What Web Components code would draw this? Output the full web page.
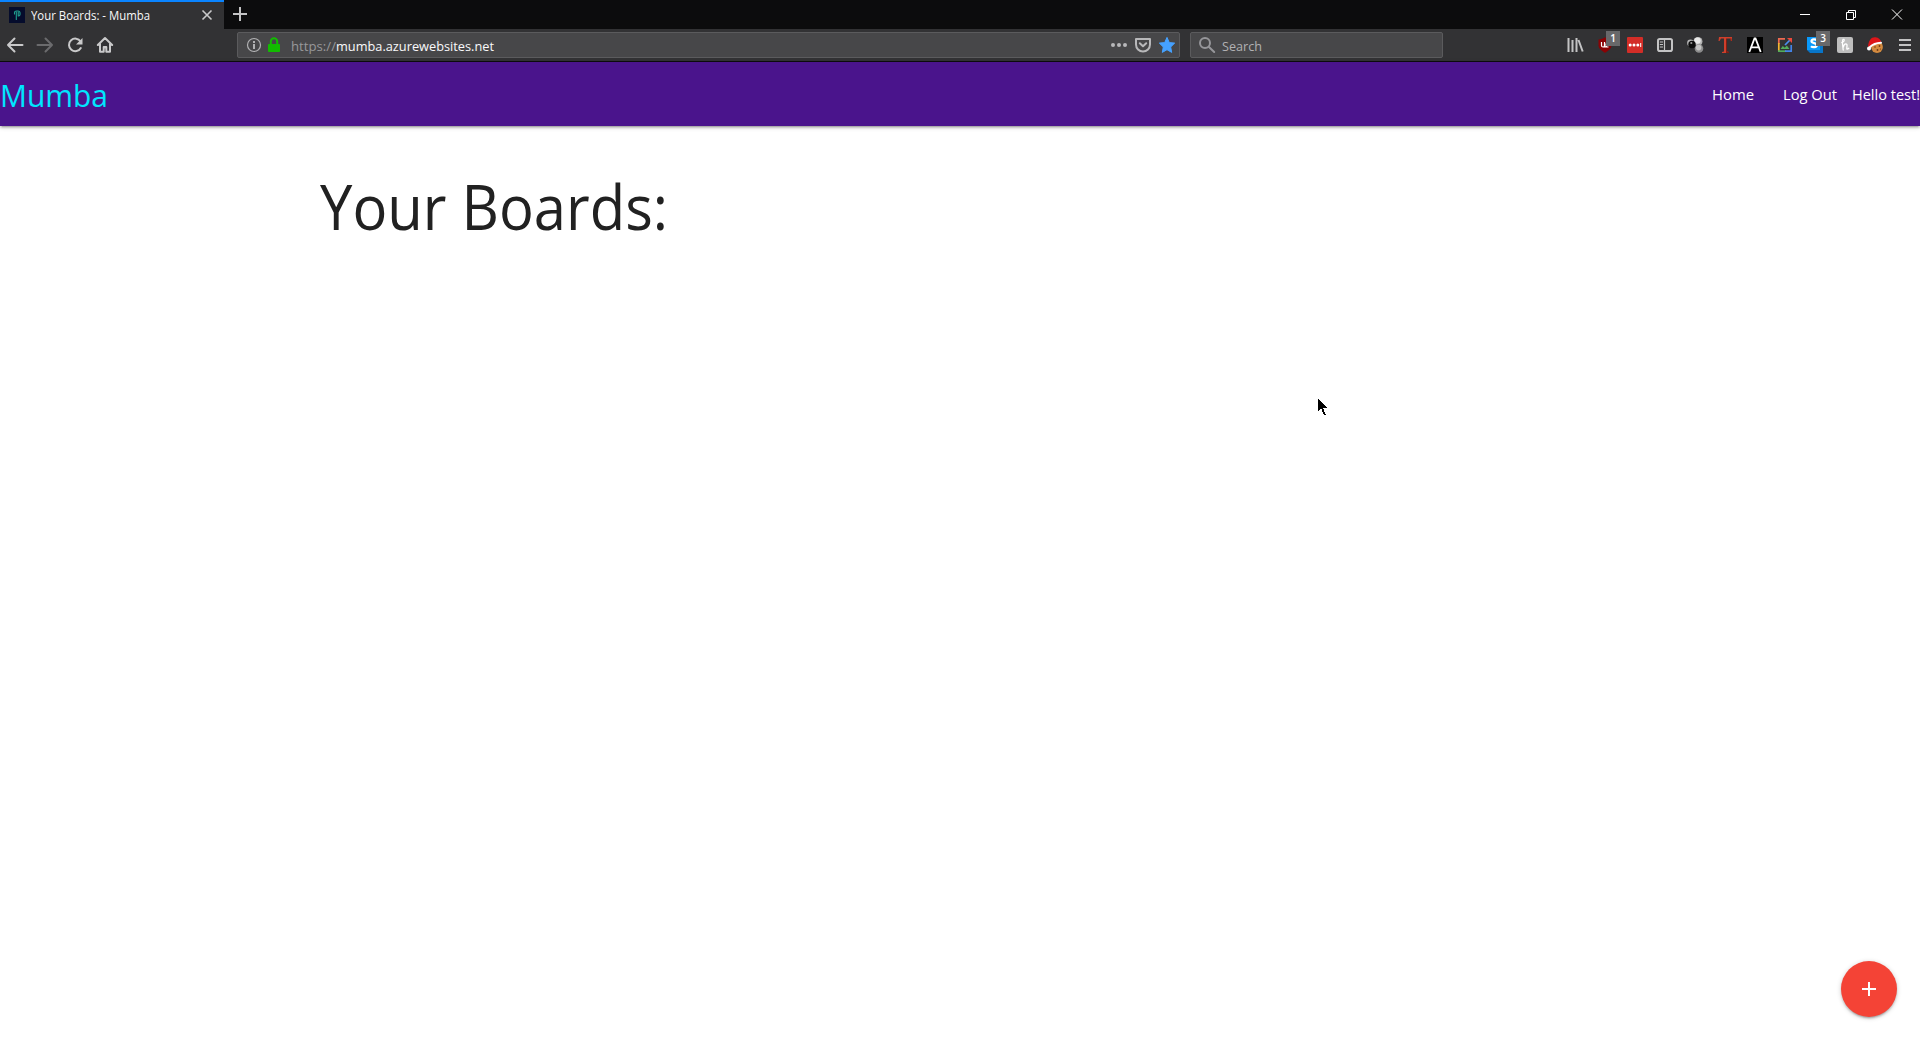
<!DOCTYPE html>
<html lang="en">
<head>
<meta charset="utf-8">
<title>Your Boards: - Mumba</title>
<style>
html,body{margin:0;height:100%;overflow:hidden;background:#fff}
body{font-family:"Open Sans","Noto Sans",sans-serif}
</style>
</head>
<body>
<app-window></app-window>
<script>
const define = (name, html, setup) => customElements.define(name, class extends HTMLElement {
  connectedCallback() {
    if (this.shadowRoot) return;
    const t = document.createElement('template');
    t.innerHTML = typeof html === 'function' ? html(this) : html;
    this.attachShadow({mode: 'open'}).append(t.content.cloneNode(true));
    if (setup) setup(this);
  }
});

/* Icons, each drawn on a 20x20 grid */
const icons = {
  back: '<path d="M17.5 10H3M9.5 3.500 3 10l6.500 6.500" fill="none" stroke="#c9c9ca" stroke-width="2" stroke-linecap="round" stroke-linejoin="round"/>',
  forward: '<path d="M2.500 10H17M10.500 3.500 17 10l-6.500 6.500" fill="none" stroke="#6b6b6d" stroke-width="2" stroke-linecap="round" stroke-linejoin="round"/>',
  reload: '<path d="M15.6 6.5A6.3 6.3 0 1 0 15.8 13" fill="none" stroke="#c9c9ca" stroke-width="2" stroke-linecap="round"/><path d="M17.5 3v6.5H11z" fill="#c9c9ca"/>',
  home: '<path d="M2.8 10 10 3l7.2 7M5 9v7.8h3.7V12h2.6v4.8H15V9" fill="none" stroke="#c9c9ca" stroke-width="2" stroke-linecap="round" stroke-linejoin="round"/><path d="M9.2 12h1.6v1.6H9.2z" fill="#c9c9ca"/>',
  info: '<circle cx="10" cy="10" r="6.5" fill="none" stroke="#b1b1b3" stroke-width="1.2"/><path d="M9 6h2v2H9zM9 9h2v5H9z" fill="#b1b1b3"/>',
  lock: '<path d="M6.8 10V6.5a3.2 3.2 0 0 1 6.4 0V10" fill="none" stroke="#12bc00" stroke-width="2"/><rect x="4" y="9" width="12" height="8" rx="1" fill="#12bc00"/>',
  dots: '<g fill="#b8b8ba"><circle cx="4" cy="10" r="2"/><circle cx="10" cy="10" r="2"/><circle cx="16" cy="10" r="2"/></g>',
  pocket: '<path d="M3 4h14v5.5a7 7 0 0 1-14 0z" fill="none" stroke="#b8b8ba" stroke-width="2" stroke-linejoin="round"/><path d="M6.8 8.3 10 11.3l3.2-3" fill="none" stroke="#b8b8ba" stroke-width="2" stroke-linecap="round" stroke-linejoin="round"/>',
  star: '<path d="M10 2.4l2.3 5.2 5.4.5-4 3.9 1 5.4-4.7-2.7-4.7 2.7 1-5.4-4-3.9 5.4-.5z" fill="#45a1ff" stroke="#45a1ff" stroke-width="1" stroke-linejoin="round"/>',
  search: '<circle cx="8" cy="8" r="5" fill="none" stroke="#96969a" stroke-width="2"/><path d="M12 12l5.2 5" stroke="#96969a" stroke-width="2" stroke-linecap="round"/>',
  library: '<path d="M3.5 3v14M7.5 5v12M11.5 3v14M13.5 5l4.2 11.5" stroke="#c3c3c4" stroke-width="2" fill="none"/>',
  shield: '<path d="M10 2.2c2 1.500 4 2 6.500 2.200v6c0 3-3.500 5.500-6.500 7.400-3-1.900-6.500-4.400-6.500-7.400v-6C6 4.200 8 3.700 10 2.200z" fill="#8a0204"/><path d="M6.500 7v3.500q0 1.500 1.500 1.500t1.500-1.500V7M9.500 10.500q0 1.500 1.500 1.500h2.500M14 7.500h-1.500q-1.500 0-1.500 2t1 2.500" fill="none" stroke="#fff" stroke-width="1.200"/>',
  pass: '<rect x="2" y="2" width="16" height="16" rx="1" fill="#d32d27"/><g fill="#fff"><circle cx="5.200" cy="10" r="1.500"/><circle cx="9" cy="10" r="1.500"/><circle cx="12.800" cy="10" r="1.500"/><path d="M15.200 8h1v4h-1z"/></g>',
  sidebar: '<rect x="3" y="4" width="14" height="12" rx="1.800" fill="none" stroke="#c3c3c4" stroke-width="2"/><path d="M9.500 4v12" stroke="#c3c3c4" stroke-width="1.200"/><path d="M4.800 7h3.200M4.800 9.500h3.200M4.800 12h3.200" stroke="#c3c3c4"/>',
  spheres: '<circle cx="5.500" cy="8" r="3.400" fill="#b5b5b5"/><circle cx="13" cy="6.500" r="4.500" fill="#b4b4b4"/><circle cx="12.500" cy="5.600" r="3.200" fill="#e9e9e9"/><circle cx="14" cy="13.500" r="4.300" fill="#8c8c8c"/><circle cx="13.600" cy="12.600" r="2.800" fill="#c4c4c4"/><circle cx="7" cy="9.500" r="3.700" fill="#0d0d0d"/><circle cx="6.300" cy="8" r="1.100" fill="#999"/>',
  tee: '<path d="M4 2H17V6H16L15 3.500H12V16.500L14 17V18H7V17L9 16.500V3.500H6L4.500 6H3.500Z" fill="#cf3f2b"/><path d="M11 3.500h1v13l2 .5v1h-3zM15 3.500h1.500V6H16z" fill="#7e1d13"/>',
  letter: '<rect x="2" y="2" width="16" height="16" fill="#000"/><path d="M4.300 17 9.500 3.500h1L15.700 17M6.200 12.300h7.600" fill="none" stroke="#fff" stroke-width="1.800"/>',
  picture: '<g fill="none" stroke-width="1.700"><path d="M3.800 9V3.800H10" stroke="#ed6a50"/><path d="M3.800 8v8.200" stroke="#f4b631"/><path d="M3 16.200h8" stroke="#51ad5b"/><path d="M10 16.200h6.200V10" stroke="#4384e8"/><path d="M10 10l5-5" stroke="#4b8df0"/></g><path d="M12 3h5v5l-1.800-1.800L13.500 4.500z" fill="#eb493c"/><path d="M5.500 14l2.300-3 2 1.700 2-2.200 2.700 3.500z" fill="#53ad5b"/>',
  ess: '<path d="M2 2h13l3 3v13H5l-3-3z" fill="#0875c8"/><path d="M2 2h13v13H2z" fill="#0999fa"/><path d="M11.800 5.200C10.500 4 6.500 4 6.500 6.300s5.300 1.300 5.300 4c0 2.300-4.300 2.400-5.800.9" fill="none" stroke="#fff" stroke-width="2.200"/>',
  honey: '<rect x="2" y="2" width="16" height="16" rx="2" fill="#bebebe"/><path d="M6.800 7.600q2.400-1 2.400-2.400 0-1.200-1.200-.8T8.200 15M8.400 12q.6-3.200 2.400-3.200 1.400 0 1.200 2.200l-.2 2.500q0 1.500 2-.2" fill="none" stroke="#fff" stroke-width="1.300" stroke-linecap="round"/>',
  cookie: '<circle cx="12" cy="12" r="5.900" fill="#d38a3f"/><g fill="#713c16"><circle cx="10" cy="12" r=".8"/><circle cx="14.500" cy="11" r=".9"/><circle cx="12.500" cy="15" r=".9"/><circle cx="15.500" cy="14" r=".6"/></g><path d="M3 12C3.500 5 6.500 1.800 10.500 2.200c3.200.2 5.200 2.500 5.900 5.200z" fill="#dd1519"/><path d="M5 12c3-3 6.500-4 11-4.200" stroke="#fff" stroke-width="2" stroke-linecap="round" fill="none"/><circle cx="4" cy="13.500" r="2" fill="#fff"/>',
  menu: '<path d="M4 5h12M4 10h12M4 15h12" stroke="#c3c3c4" stroke-width="2"/>',
  close: '<path d="M5.500 5.500l9 9M14.500 5.500l-9 9" stroke="#c9c9ca" stroke-width="1.600"/>',
  add: '<path d="M10 3v14M3 10h14" stroke="#c4c4c5" stroke-width="2"/>',
  minimize: '<path d="M5 10.500h10" stroke="#fff"/>',
  restore: '<path d="M5.500 8.500h7v7h-7zM7.500 8.500v-2h7v7h-2" fill="none" stroke="#fff"/>',
  quit: '<path d="M5 5.500l10 10M15 5.500l-10 10" stroke="#fff" stroke-width="1"/>',
  favicon: '<rect x="2" y="2" width="16" height="16" fill="#050c2c"/><path d="M7.500 9V7.500Q7.500 6 9.500 6h1.500q2 0 2 2v1.500q0 1.500-1.500 1.500M9.300 14.500V7M11.200 11V7" fill="none" stroke="#20a090" stroke-width="1.100" stroke-linecap="round"/>'
};

define('ui-icon', el => `<style>:host{display:block;width:20px;height:20px;flex:none}svg{display:block}</style>
<svg width="20" height="20" viewBox="0 0 20 20">${icons[el.getAttribute('name')]}</svg>`);

/* Single line of text, condensed or widened to span the given width */
define('fit-text', '<style>:host{display:block;flex:none;white-space:pre}span{display:inline-block;transform-origin:0 50%}</style><span><slot></slot></span>', el => {
  const w = +el.getAttribute('width'), span = el.shadowRoot.querySelector('span');
  span.style.transform = `scaleX(${w / span.getBoundingClientRect().width})`;
  el.style.width = w + 'px';
});

define('tool-button', el => `<style>
:host{display:flex;position:relative;width:30px;height:32px;align-items:center;justify-content:center;flex:none}
b{position:absolute;left:16px;top:2px;width:14px;height:15px;background:#68686a;color:#fff;font:600 10px/14px "Open Sans",sans-serif;text-align:center}
</style><ui-icon name="${el.getAttribute('icon')}"></ui-icon>${el.hasAttribute('badge') ? `<b>${el.getAttribute('badge')}</b>` : ''}`);

define('browser-tabs', `<style>
:host{display:flex;height:29px;background:#0c0c0d;color:#f9f9fa}
.tab{box-sizing:border-box;width:224px;height:29px;border-top:2px solid #0a84ff;background:#323234;display:flex;align-items:center;padding:0 7px;font-size:12px}
fit-text{margin-left:4px;line-height:27px}
.tab ui-icon:last-child{margin-left:auto}
.tab ui-icon{margin-bottom:1px}
.new{margin:4px 0 0 6px}
.win{margin-left:auto;display:flex;height:29px}
.win span{width:46px;display:flex;justify-content:center;padding-top:4px}
</style>
<div class="tab"><ui-icon name="favicon"></ui-icon><fit-text width="119">Your Boards: - Mumba</fit-text><ui-icon name="close"></ui-icon></div>
<ui-icon class="new" name="add"></ui-icon>
<div class="win"><span><ui-icon name="minimize"></ui-icon></span><span><ui-icon name="restore"></ui-icon></span><span><ui-icon name="quit"></ui-icon></span></div>`);

define('browser-toolbar', `<style>
:host{display:flex;box-sizing:border-box;height:33px;background:#323234;border-bottom:1px solid #0c0c0d;align-items:center}
.field{box-sizing:border-box;height:26px;border:1px solid #5b5b5d;border-radius:2px;background:#474749;display:flex;align-items:center;font-size:13px;line-height:24px;color:#b1b1b3}
.url{width:943px;margin-left:117px;padding:0 2px 0 6px}
.url fit-text,.search fit-text{padding-top:2px}
.scheme{margin-left:7px;color:#98989a}.host{color:#f9f9fa}
.actions{margin-left:auto;display:flex;gap:4px}
.search{width:253px;margin-left:10px;padding-left:6px}
.search fit-text{margin-left:5px}
.tools{display:flex;margin-left:auto}
</style>
<tool-button icon="back"></tool-button><tool-button icon="forward"></tool-button><tool-button icon="reload"></tool-button><tool-button icon="home"></tool-button>
<div class="field url"><ui-icon name="info"></ui-icon><ui-icon name="lock"></ui-icon><fit-text class="scheme" width="45">https://</fit-text><fit-text class="host" width="158">mumba.azurewebsites.net</fit-text>
<div class="actions"><ui-icon name="dots"></ui-icon><ui-icon name="pocket"></ui-icon><ui-icon name="star"></ui-icon></div></div>
<div class="field search"><ui-icon name="search"></ui-icon><fit-text width="40">Search</fit-text></div>
<div class="tools"><tool-button icon="library"></tool-button><tool-button icon="shield" badge="1"></tool-button><tool-button icon="pass"></tool-button><tool-button icon="sidebar"></tool-button><tool-button icon="spheres"></tool-button><tool-button icon="tee"></tool-button><tool-button icon="letter"></tool-button><tool-button icon="picture"></tool-button><tool-button icon="ess" badge="3"></tool-button><tool-button icon="honey"></tool-button><tool-button icon="cookie"></tool-button><tool-button icon="menu"></tool-button></div>`);

define('site-nav', `<style>
:host{display:flex;height:64px;background:#4a148c;box-shadow:0 2px 2px 0 rgba(0,0,0,.14),0 3px 1px -2px rgba(0,0,0,.12),0 1px 5px 0 rgba(0,0,0,.2);line-height:64px;color:#fff;font-size:15px;justify-content:space-between}
.brand{font-size:31px;color:#00e5ff;padding-top:1px}
nav{display:flex}
nav fit-text+fit-text{margin-left:29px}
nav fit-text:last-child{margin-left:15px}
</style>
<fit-text class="brand" width="108">Mumba</fit-text>
<nav><fit-text width="42">Home</fit-text><fit-text width="54">Log Out</fit-text><fit-text width="68">Hello test!</fit-text></nav>`);

define('board-page', `<style>
:host{display:block;flex:1;background:#fff;color:#212121}
main{width:1280px;margin:0 auto}
h1{margin:0;padding-top:46px;font-size:62px;font-weight:400;line-height:69px}
</style><main><h1><fit-text width="348">Your Boards:</fit-text></h1></main>`);

define('add-button', `<style>
:host{position:fixed;right:23px;bottom:23.500px;width:56px;height:56px;border-radius:50%;background:#f44336;display:flex;align-items:center;justify-content:center;box-shadow:0 2px 2px 0 rgba(0,0,0,.14),0 3px 1px -2px rgba(0,0,0,.12),0 1px 5px 0 rgba(0,0,0,.2)}
</style><svg width="20" height="20" viewBox="0 0 20 20"><path d="M10 3v14M3 10h14" stroke="#fff" stroke-width="2"/></svg>`);

define('mouse-pointer', `<style>:host{position:fixed;left:1318px;top:399px}svg{display:block}</style>
<svg width="9" height="17" viewBox="0 0 9 17" shape-rendering="crispEdges"><path d="M0 0v12l3-3 3 7h2L5 9h4L0 0z"/></svg>`);

define('app-window', `<style>:host{display:flex;flex-direction:column;height:100vh}site-nav{position:relative;z-index:1}</style>
<browser-tabs></browser-tabs><browser-toolbar></browser-toolbar><site-nav></site-nav><board-page></board-page><add-button></add-button><mouse-pointer></mouse-pointer>`);
</script>
</body>
</html>
